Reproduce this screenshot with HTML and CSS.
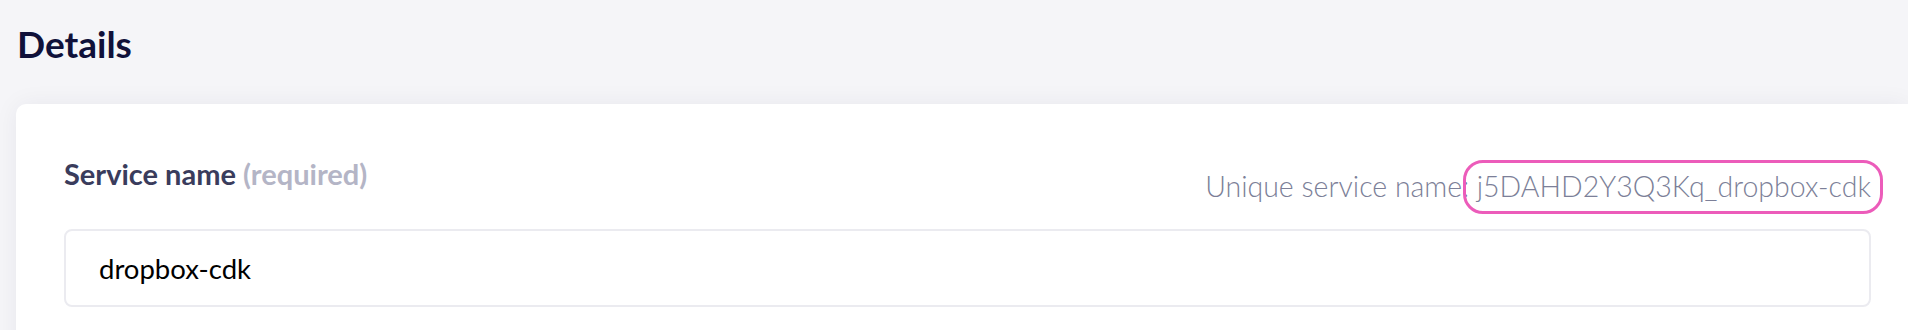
FILE: index.html
```html
<!DOCTYPE html>
<html lang="en">
<head>
	<meta charset="UTF-8">
	<title>Details</title>
	<link rel="stylesheet" href="styles.css">
</head>
<body>
	<div class="page">
		<h2 class="title">Details</h2>
		<div class="card">
			<div class="field-head">
				<label class="label" for="service-name">Service name <span class="hint">(required)</span></label>
				<div class="unique">Unique service name: <span class="unique-value">j5DAHD2Y3Q3Kq_dropbox-cdk</span></div>
			</div>
			<input class="input" id="service-name" type="text" value="dropbox-cdk">
		</div>
	</div>
</body>
</html>
```

FILE: styles.css
```css
body {
	margin: 0;
	background: #f5f5f8;
	font-family: "Lato", "Noto Sans", sans-serif;
	overflow: hidden;
}
.page {
	padding: 0 0 0 16px;
}
.title {
	margin: 0;
	padding: 20px 0 0 1px;
	height: 104px;
	box-sizing: border-box;
	font-size: 37px;
	font-weight: 700;
	color: #10113a;
	line-height: 48px;
}
.card {
	background: #fff;
	border-radius: 10px 0 0 0;
	box-shadow: 0 0 24px rgba(20, 20, 60, 0.06);
	padding: 50px 37px 40px 48px;
	height: 300px;
}
.field-head {
	display: flex;
	justify-content: space-between;
	align-items: flex-start;
}
.label {
	font-size: 29px;
	font-weight: 700;
	color: #3a3c5c;
	line-height: 40px;
}
.hint {
	color: #b4b5c6;
}
.unique {
	margin-top: 14px;
	font-size: 28.5px;
	font-weight: 300;
	color: #7c7f98;
	line-height: 37px;
}
.unique-value {
	position: relative;
}
.unique-value::after {
	content: "";
	position: absolute;
	left: -14px;
	right: -12px;
	top: -9px;
	bottom: -11px;
	border: 3px solid #ec5cba;
	border-radius: 20px;
}
.input {
	display: block;
	box-sizing: border-box;
	width: 100%;
	height: 78px;
	margin-top: 24px;
	padding: 0 33px;
	border: 2px solid #ebebf0;
	border-radius: 8px;
	font-family: inherit;
	font-size: 27.5px;
	color: #000;
	outline: none;
}
```
